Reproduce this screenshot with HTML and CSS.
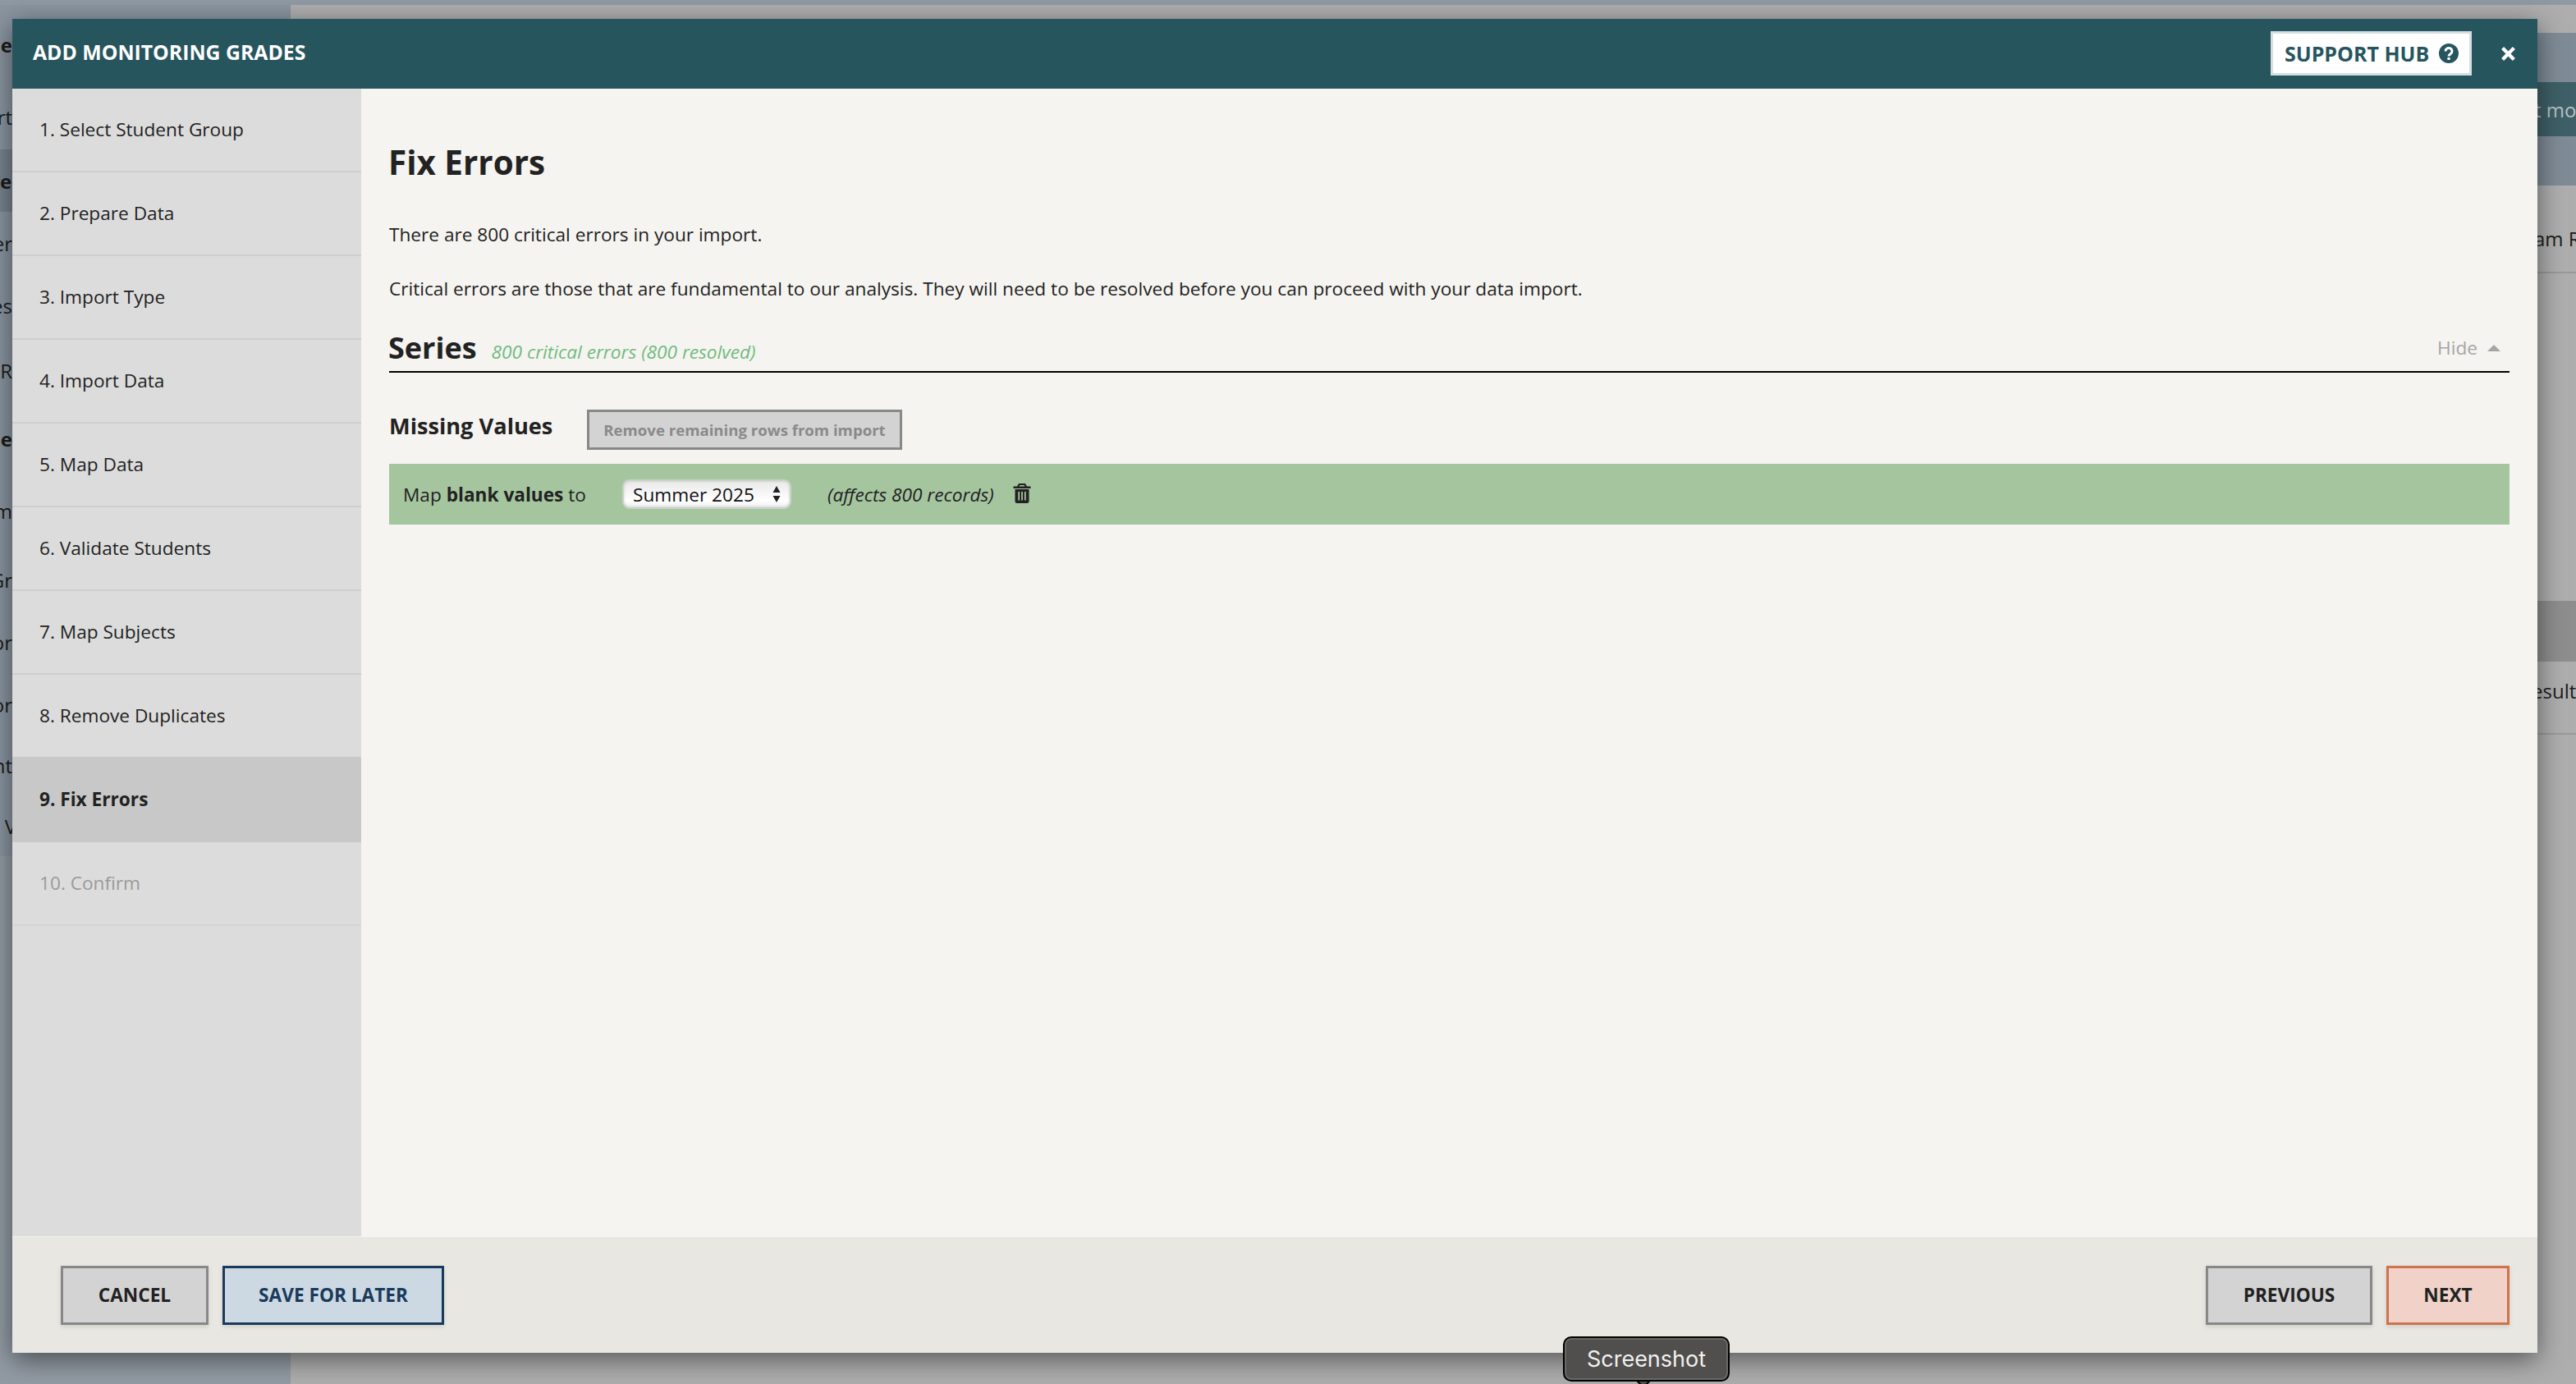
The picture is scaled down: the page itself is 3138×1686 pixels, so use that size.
FILE: index.html
```html
<!DOCTYPE html>
<html lang="en">
<head>
<meta charset="utf-8">
<title>Add Monitoring Grades</title>
<link rel="stylesheet" href="styles.css">
</head>
<body>
<div class="page">
  <div class="page-top"></div>
  <div class="page-body">
    <aside class="page-side">
      <div class="page-nav">
        <div class="peek peek-1">ne</div>
        <div class="peek peek-2">rt</div>
        <div class="peek peek-3">e,</div>
        <div class="peek peek-4">er</div>
        <div class="peek peek-5">es</div>
        <div class="peek peek-6">R</div>
        <div class="peek peek-7">ne</div>
        <div class="peek peek-8">m</div>
        <div class="peek peek-9">Gr</div>
        <div class="peek peek-10">or</div>
        <div class="peek peek-11">or</div>
        <div class="peek peek-12">nt</div>
        <div class="peek peek-13">t V</div>
      </div>
    </aside>
    <main class="page-main">
      <div class="band"></div>
      <div class="band-teal"><span>t mor</span></div>
      <div class="band"></div>
      <div class="page-row page-row-1"><span>am R</span></div>
      <div class="page-head"></div>
      <div class="page-row page-row-2"><span>esult</span></div>
    </main>
  </div>
</div>

<div class="modal">
  <header class="modal-head">
    <h2 class="modal-title">ADD MONITORING GRADES</h2>
    <a class="support">SUPPORT HUB
      <svg class="support-icon" viewBox="0 0 24 24" aria-hidden="true"><circle cx="12" cy="12" r="12" fill="#26555e"/><path d="M8 9.4a4 3.9 0 1 1 6.2 3.2c-1.4.9-2.2 1.4-2.2 2.9" fill="none" stroke="#fff" stroke-width="3"/><rect x="10.4" y="17" width="3.2" height="3" fill="#fff"/></svg>
    </a>
    <svg class="close-icon" viewBox="0 0 16 16" aria-hidden="true"><path d="M1.500 1.500l13 13M14.500 1.500l-13 13" stroke="#fff" stroke-width="4" fill="none"/></svg>
  </header>
  <div class="modal-body">
    <nav class="steps">
      <div class="step">1. Select Student Group</div>
      <div class="step">2. Prepare Data</div>
      <div class="step">3. Import Type</div>
      <div class="step">4. Import Data</div>
      <div class="step">5. Map Data</div>
      <div class="step">6. Validate Students</div>
      <div class="step">7. Map Subjects</div>
      <div class="step">8. Remove Duplicates</div>
      <div class="step step-active">9. Fix Errors</div>
      <div class="step step-off">10. Confirm</div>
    </nav>
    <section class="content">
      <h1 class="page-title">Fix Errors</h1>
      <p class="lead">There are 800 critical errors in your import.</p>
      <p class="lead lead-2">Critical errors are those that are fundamental to our analysis. They will need to be resolved before you can proceed with your data import.</p>
      <div class="series-head">
        <h3 class="series-title">Series</h3>
        <span class="series-note">800 critical errors (800 resolved)</span>
        <span class="hide">Hide
          <svg class="hide-icon" viewBox="0 0 16 8" aria-hidden="true"><path d="M8 0l8 8H0z" fill="#a5a5a5"/></svg>
        </span>
      </div>
      <div class="missing">
        <h4 class="missing-title">Missing Values</h4>
        <button class="btn-remove">Remove remaining rows from import</button>
      </div>
      <div class="map-row">
        <span class="map-label">Map <b>blank values</b> to</span>
        <div class="select">
          <span>Summer 2025</span>
          <svg class="select-icon" viewBox="0 0 10 22" aria-hidden="true"><path d="M5 1l4.500 8H.500zM5 21L.500 13h9z" fill="#222"/></svg>
        </div>
        <em class="affects">(affects 800 records)</em>
        <svg class="trash" viewBox="0 0 22 24" aria-hidden="true"><path fill="#222" fill-rule="evenodd" d="M7 0h8l2 3.500h4.500V6H.500V3.500H5zM8.300 2L7.500 3.500h7L13.700 2zM2.500 7h17v14.500a2.500 2.500 0 0 1-2.500 2.500H5a2.500 2.500 0 0 1-2.500-2.500zM6.300 10v10.500h1.800V10zM10.100 10v10.500h1.800V10zM13.900 10v10.500h1.800V10z"/></svg>
      </div>
    </section>
  </div>
  <footer class="modal-foot">
    <button class="btn btn-grey btn-cancel">CANCEL</button>
    <button class="btn btn-blue">SAVE FOR LATER</button>
    <span class="foot-gap"></span>
    <button class="btn btn-grey btn-prev">PREVIOUS</button>
    <button class="btn btn-orange">NEXT</button>
  </footer>
</div>

<div class="dock-tip">Screenshot</div>
</body>
</html>
```

FILE: styles.css
```css
* { box-sizing: border-box; }
html, body { margin: 0; padding: 0; height: 100%; }
body {
  width: 3138px;
  height: 1686px;
  overflow: hidden;
  position: relative;
  font-family: "Open Sans", "Noto Sans", sans-serif;
  font-size: 22.65px;
  color: #222;
  background: #aeaeae;
}
h1, h2, h3, h4, p { margin: 0; }

/* page behind the modal */
.page { display: flex; flex-direction: column; height: 100%; }
.page-top { height: 6px; background: #8f99a3; flex: none; }
.page-body { flex: 1; display: flex; min-height: 0; }
.page-side { width: 354px; flex: none; background: #929ba4; }
.page-nav { height: 1037px; background: #8a95a0; display: flex; flex-direction: column; }
.peek { height: 75px; width: 15px; display: flex; align-items: center; justify-content: flex-end; white-space: nowrap; color: #1c1c1c; flex: none; font-size: 24px; }
.peek-1 { height: 96px; font-weight: 700; }
.peek-2 { height: 80px; }
.peek-3 { width: 354px; height: 76px; background: #77838f; font-weight: 700; justify-content: flex-start; }
.peek-4 { height: 76px; }
.peek-5 { height: 76px; }
.peek-6 { height: 82px; }
.peek-7 { height: 84px; font-weight: 700; }
.peek-8 { height: 92px; }
.peek-9 { height: 76px; }
.peek-10 { height: 76px; }
.peek-11 { height: 76px; }
.peek-12 { height: 72px; }
.peek-13 { height: 76px; width: 20px; }
.page-main { flex: 1; padding-top: 34px; display: flex; flex-direction: column; align-items: stretch; font-size: 24px; }
.band { height: 60px; background: #7f8b96; flex: none; }
.band-teal { height: 66px; background: #3f6068; color: #b7c3c6; flex: none; display: flex; align-items: center; padding-left: 2733px; }
.page-row { flex: none; border-bottom: 2px solid #999; display: flex; color: #1c1c1c; }
.page-row-1 { height: 107px; padding: 48px 0 0 2733px; }
.page-row-2 { height: 89px; padding: 19px 0 0 2730px; }
.page-head { height: 473px; flex: none; background: linear-gradient(#aeaeae 0 399px, #8e8e8e 399px); }
.page-row span, .band-teal span { white-space: nowrap; }

/* modal */
.modal {
  position: absolute;
  left: 15px;
  top: 23px;
  width: 3076px;
  height: 1625px;
  display: flex;
  flex-direction: column;
  background: #f5f4f0;
  box-shadow: 0 8px 30px rgba(0, 0, 0, .5);
}
.modal-head {
  height: 85px;
  flex: none;
  background: #26555e;
  display: flex;
  align-items: center;
  padding: 0 27px 0 25px;
}
.modal-title { flex: 1; font-size: 24.8px; line-height: 1; font-weight: 700; color: #fff; margin-top: -4px; }
.support {
  width: 245px;
  height: 54px;
  margin-top: -1px;
  display: flex;
  align-items: center;
  justify-content: space-between;
  padding: 0 13px 0 14px;
  background: #fff;
  border: 3px solid #d3dfe0;
  color: #26555e;
  font-size: 25px;
  font-weight: 700;
}
.support-icon { width: 24px; height: 24px; }
.close-icon { width: 17px; height: 17px; margin-left: 36px; margin-top: -1px; }

.modal-body { flex: 1; display: flex; min-height: 0; }
.steps { width: 425px; flex: none; background: #dcdcdc; border-bottom: 1px solid #f1f1ee; }
.step {
  height: 102px;
  display: flex;
  align-items: center;
  padding: 0 32px 2px 33px;
  border-bottom: 2px solid #cecece;
}
.step-active { height: 104px; margin-top: -2px; background: #c8c8c8; border-bottom: 0; font-weight: 700; }
.step-off { color: #9a9a9a; border-bottom-color: #d4d4d4; }

.content { flex: 1; padding: 0 34px; min-width: 0; }
.page-title { font-size: 40.4px; line-height: 54px; font-weight: 700; margin: 63px 0 0 -1px; }
.lead { line-height: 34px; margin-top: 44px; }
.lead-2 { margin-top: 32px; }
.series-head { display: flex; align-items: baseline; margin-top: 31px; height: 54px; border-bottom: 2px solid #000; }
.series-title { font-size: 36px; line-height: 48px; font-weight: 700; margin-left: -1px; }
.series-note { margin-left: 18px; font-style: italic; color: #72bb80; }
.hide { align-self: flex-start; line-height: 48px; margin-left: auto; margin-right: 11px; color: #a5a5a5; display: flex; align-items: center; gap: 12px; }
.hide-icon { width: 16px; height: 8px; }
.missing { display: flex; align-items: center; margin-top: 45px; height: 49px; }
.missing-title { width: 241px; font-size: 27.2px; font-weight: 700; line-height: 38px; margin-top: -10px; }
.btn-remove {
  width: 384px;
  height: 49px;
  padding: 0;
  background: #d3d3d3;
  border: 3px solid #888;
  color: #8a8a8a;
  font: 700 18.6px "Open Sans", sans-serif;
}
.map-row {
  margin-top: 17px;
  height: 74px;
  background: #a5c59f;
  display: flex;
  align-items: center;
  padding-left: 17px;
}
.map-label { width: 267px; }
.select {
  width: 206px;
  height: 36px;
  display: flex;
  align-items: center;
  justify-content: space-between;
  padding: 0 11px 0 11px;
  border: 2px solid #c9d4c6;
  border-radius: 9px;
  background: linear-gradient(#e9e9e9, #fff 75%, #eee);
  box-shadow: inset 0 0 3px rgba(0, 0, 0, .2);
  color: #111;
}
.select-icon { width: 10px; height: 22px; }
.affects { margin-left: 44px; width: 226px; }
.trash { width: 22px; height: 24px; margin-top: -2px; }

.modal-foot {
  height: 141px;
  flex: none;
  display: flex;
  align-items: center;
  background: #e8e7e2;
  padding: 0 34px 0 59px;
  gap: 17px;
}
.foot-gap { flex: 1; }
.btn {
  height: 72px;
  padding: 0;
  border: 3px solid #888;
  font: 700 22.65px "Open Sans", sans-serif;
  color: #222;
  box-shadow: 0 2px 5px rgba(0, 0, 0, .12);
}
.btn-grey { background: #d3d3d3; }
.btn-cancel { width: 180px; }
.btn-blue { width: 270px; background: #ccd9e3; border-color: #1a3a5c; color: #1a3a5c; }
.btn-prev { width: 203px; }
.btn-orange { width: 150px; background: #f0d2c8; border-color: #d0724e; }

/* dock tooltip */
.dock-tip {
  position: absolute;
  left: 1904px;
  top: 1628px;
  width: 203px;
  height: 55px;
  display: flex;
  align-items: center;
  justify-content: center;
  background: #504f4d;
  border: 2px solid #000;
  border-radius: 10px;
  box-shadow: inset 0 0 0 2px #696866;
  color: #f0f0f0;
  font-family: Inter, "Liberation Sans", sans-serif;
  font-size: 27px;
}
.dock-tip::after {
  content: "";
  position: absolute;
  left: 88px;
  bottom: -7px;
  width: 14px;
  height: 14px;
  background: #504f4d;
  border-right: 2px solid #000;
  border-bottom: 2px solid #000;
  transform: rotate(45deg);
  z-index: -1;
}
```
